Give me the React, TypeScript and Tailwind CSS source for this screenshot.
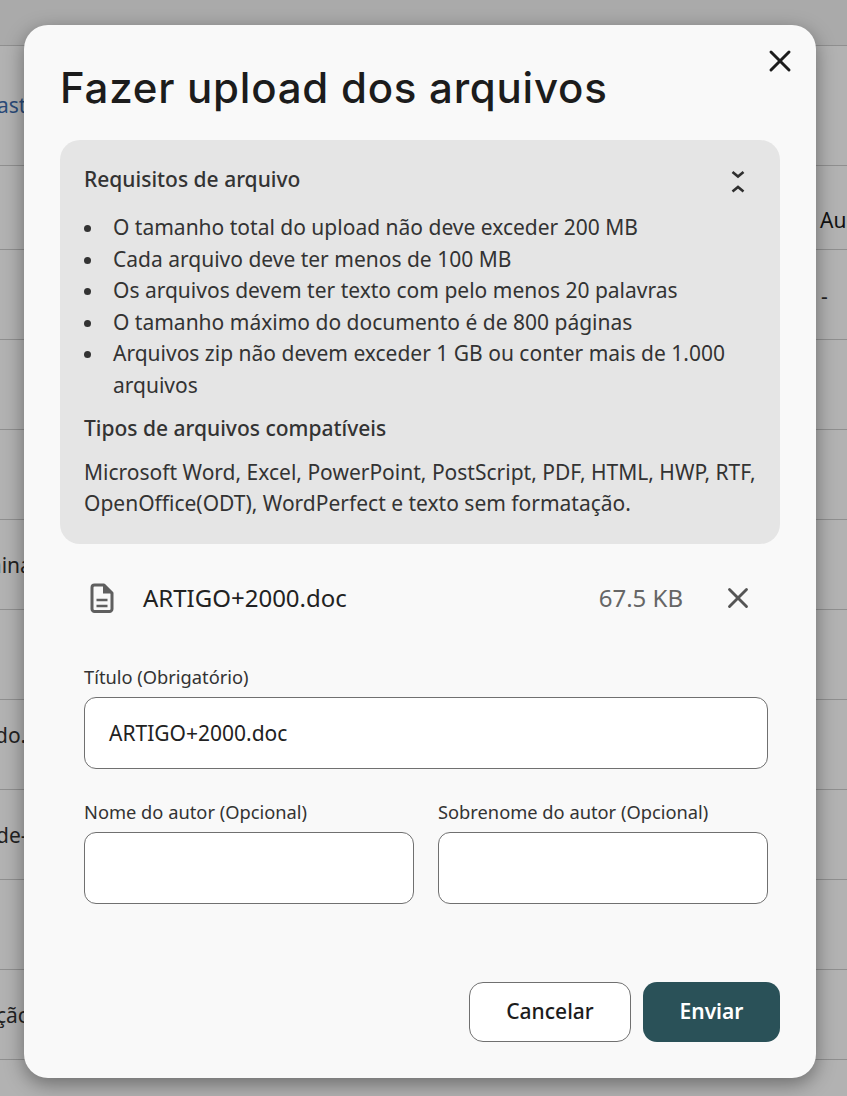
import { X } from "lucide-react";

const rowHeights = [120, 84, 90, 90, 90, 90, 90, 90, 90, 90, 90, 37];

const requirements = [
  "O tamanho total do upload não deve exceder 200 MB",
  "Cada arquivo deve ter menos de 100 MB",
  "Os arquivos devem ter texto com pelo menos 20 palavras",
  "O tamanho máximo do documento é de 800 páginas",
  "Arquivos zip não devem exceder 1 GB ou conter mais de 1.000 arquivos",
];

function FileIcon() {
  return (
    <svg width="24" height="30" viewBox="0 0 24 30" fill="none" className="text-[#5f5f5f]">
      <path
        d="M4.5 2h9.5l8 8v16a2.5 2.5 0 0 1-2.5 2.5h-15A2.5 2.5 0 0 1 2 26V4.5A2.5 2.5 0 0 1 4.5 2Z"
        stroke="currentColor"
        strokeWidth="3"
        strokeLinejoin="round"
      />
      <path d="M13 2v8.5h9Z" fill="currentColor" />
      <path d="M6.5 17h11M6.5 23h11" stroke="currentColor" strokeWidth="2.6" />
    </svg>
  );
}

function ChevronsIcon() {
  return (
    <svg width="16" height="28" viewBox="0 0 16 28" fill="none" stroke="#2f2f2f" strokeWidth="2.6">
      <path d="M2.5 6 8 10.5 13.5 6" />
      <path d="M2.5 25.5 8 21l5.5 4.5" />
    </svg>
  );
}

function Field({ label, value }: { label: string; value?: string }) {
  return (
    <div className="flex flex-col">
      <label className="text-[18.3px] leading-[24px] text-[#333] mb-[8px]">{label}</label>
      <div className="h-[72px] bg-white border border-[#707070] rounded-[12px] px-[24px] pt-[1px] flex items-center text-[21px] text-[#222]">
        {value}
      </div>
    </div>
  );
}

export default function App() {
  return (
    <div className="relative h-[1096px] w-[847px] overflow-hidden bg-[#b2b2b2] font-['Noto_Sans',sans-serif]">
      {/* page behind the overlay */}
      <div className="h-[46px] bg-[#aaaaaa] border-b border-[#8f8f8f]" />
      {rowHeights.map((h, i) => (
        <div key={i} style={{ height: h }} className="border-b border-[#8f8f8f]" />
      ))}

      <div className="absolute inset-0 text-[21px] text-[#222]">
        <span className="absolute left-[-3px] top-[90px] text-[#2a4a78]">ast</span>
        <span className="absolute left-[820px] top-[205px] text-[#111]">Au</span>
        <span className="absolute left-[821px] top-[281px]">-</span>
        <span className="absolute left-[-18px] top-[550px]">mina</span>
        <span className="absolute left-[-5px] top-[720px]">do.</span>
        <span className="absolute left-[-4px] top-[820px]">de-</span>
        <span className="absolute left-[-8px] top-[910px] text-[#2a4a78]">t</span>
        <span className="absolute left-[-4px] top-[1000px]">ção</span>
      </div>

      {/* modal */}
      <div className="absolute left-[24px] top-[25px] w-[792px] h-[1053px] bg-[#f9f9f9] rounded-[24px] shadow-[0_6px_20px_rgba(0,0,0,0.4)] px-[36px] flex flex-col">
        <button className="absolute right-[18px] top-[18px] text-[#1c1c1c]">
          <X size={36} strokeWidth={2} />
        </button>
        <h1 className="mt-[34px] text-[42px] leading-[58px] font-medium tracking-[0.75px] text-[#1c1c1c] font-['Inter',sans-serif]">
          Fazer upload dos arquivos
        </h1>

        <div className="mt-[23px] h-[404px] bg-[#e5e5e5] rounded-[20px] px-[24px] pt-[24px] text-[21px] leading-[31.5px] text-[#333]">
          <div className="flex justify-between items-center h-[32px] pr-[10px]">
            <span className="font-medium">Requisitos de arquivo</span>
            <ChevronsIcon />
          </div>
          <ul className="mt-[16px]">
            {requirements.map((r) => (
              <li key={r} className="flex">
                <span className="w-[29px] shrink-0 pt-[13px]">
                  <span className="block w-[7px] h-[7px] rounded-full bg-[#333]" />
                </span>
                <span>{r}</span>
              </li>
            ))}
          </ul>
          <p className="mt-[12px] font-medium">Tipos de arquivos compatíveis</p>
          <p className="mt-[12px]">
            Microsoft Word, Excel, PowerPoint, PostScript, PDF, HTML, HWP, RTF, OpenOffice(ODT), WordPerfect e texto sem formatação.
          </p>
        </div>

        <div className="mt-[16px] h-[76px] flex items-center pl-[30px] pr-[25px]">
          <FileIcon />
          <span className="ml-[29px] text-[24px] text-[#222]">ARTIGO+2000.doc</span>
          <span className="ml-auto text-[24px] text-[#666]">67.5 KB</span>
          <X size={34} strokeWidth={2} className="ml-[38px] text-[#555]" />
        </div>

        <div className="mt-[29px] mx-[24px] w-[684px] flex flex-col gap-[31px]">
          <Field label="Título (Obrigatório)" value="ARTIGO+2000.doc" />
          <div className="grid grid-cols-2 gap-[24px]">
            <Field label="Nome do autor (Opcional)" />
            <Field label="Sobrenome do autor (Opcional)" />
          </div>
        </div>

        <div className="mt-[78px] flex justify-end gap-[12px]">
          <button className="w-[162px] h-[60px] bg-white border border-[#707070] rounded-[14px] text-[21px] font-medium text-[#1c1c1c]">
            Cancelar
          </button>
          <button className="w-[137px] h-[60px] bg-[#2a5158] rounded-[14px] text-[21px] font-semibold text-white">
            Enviar
          </button>
        </div>
      </div>
    </div>
  );
}
